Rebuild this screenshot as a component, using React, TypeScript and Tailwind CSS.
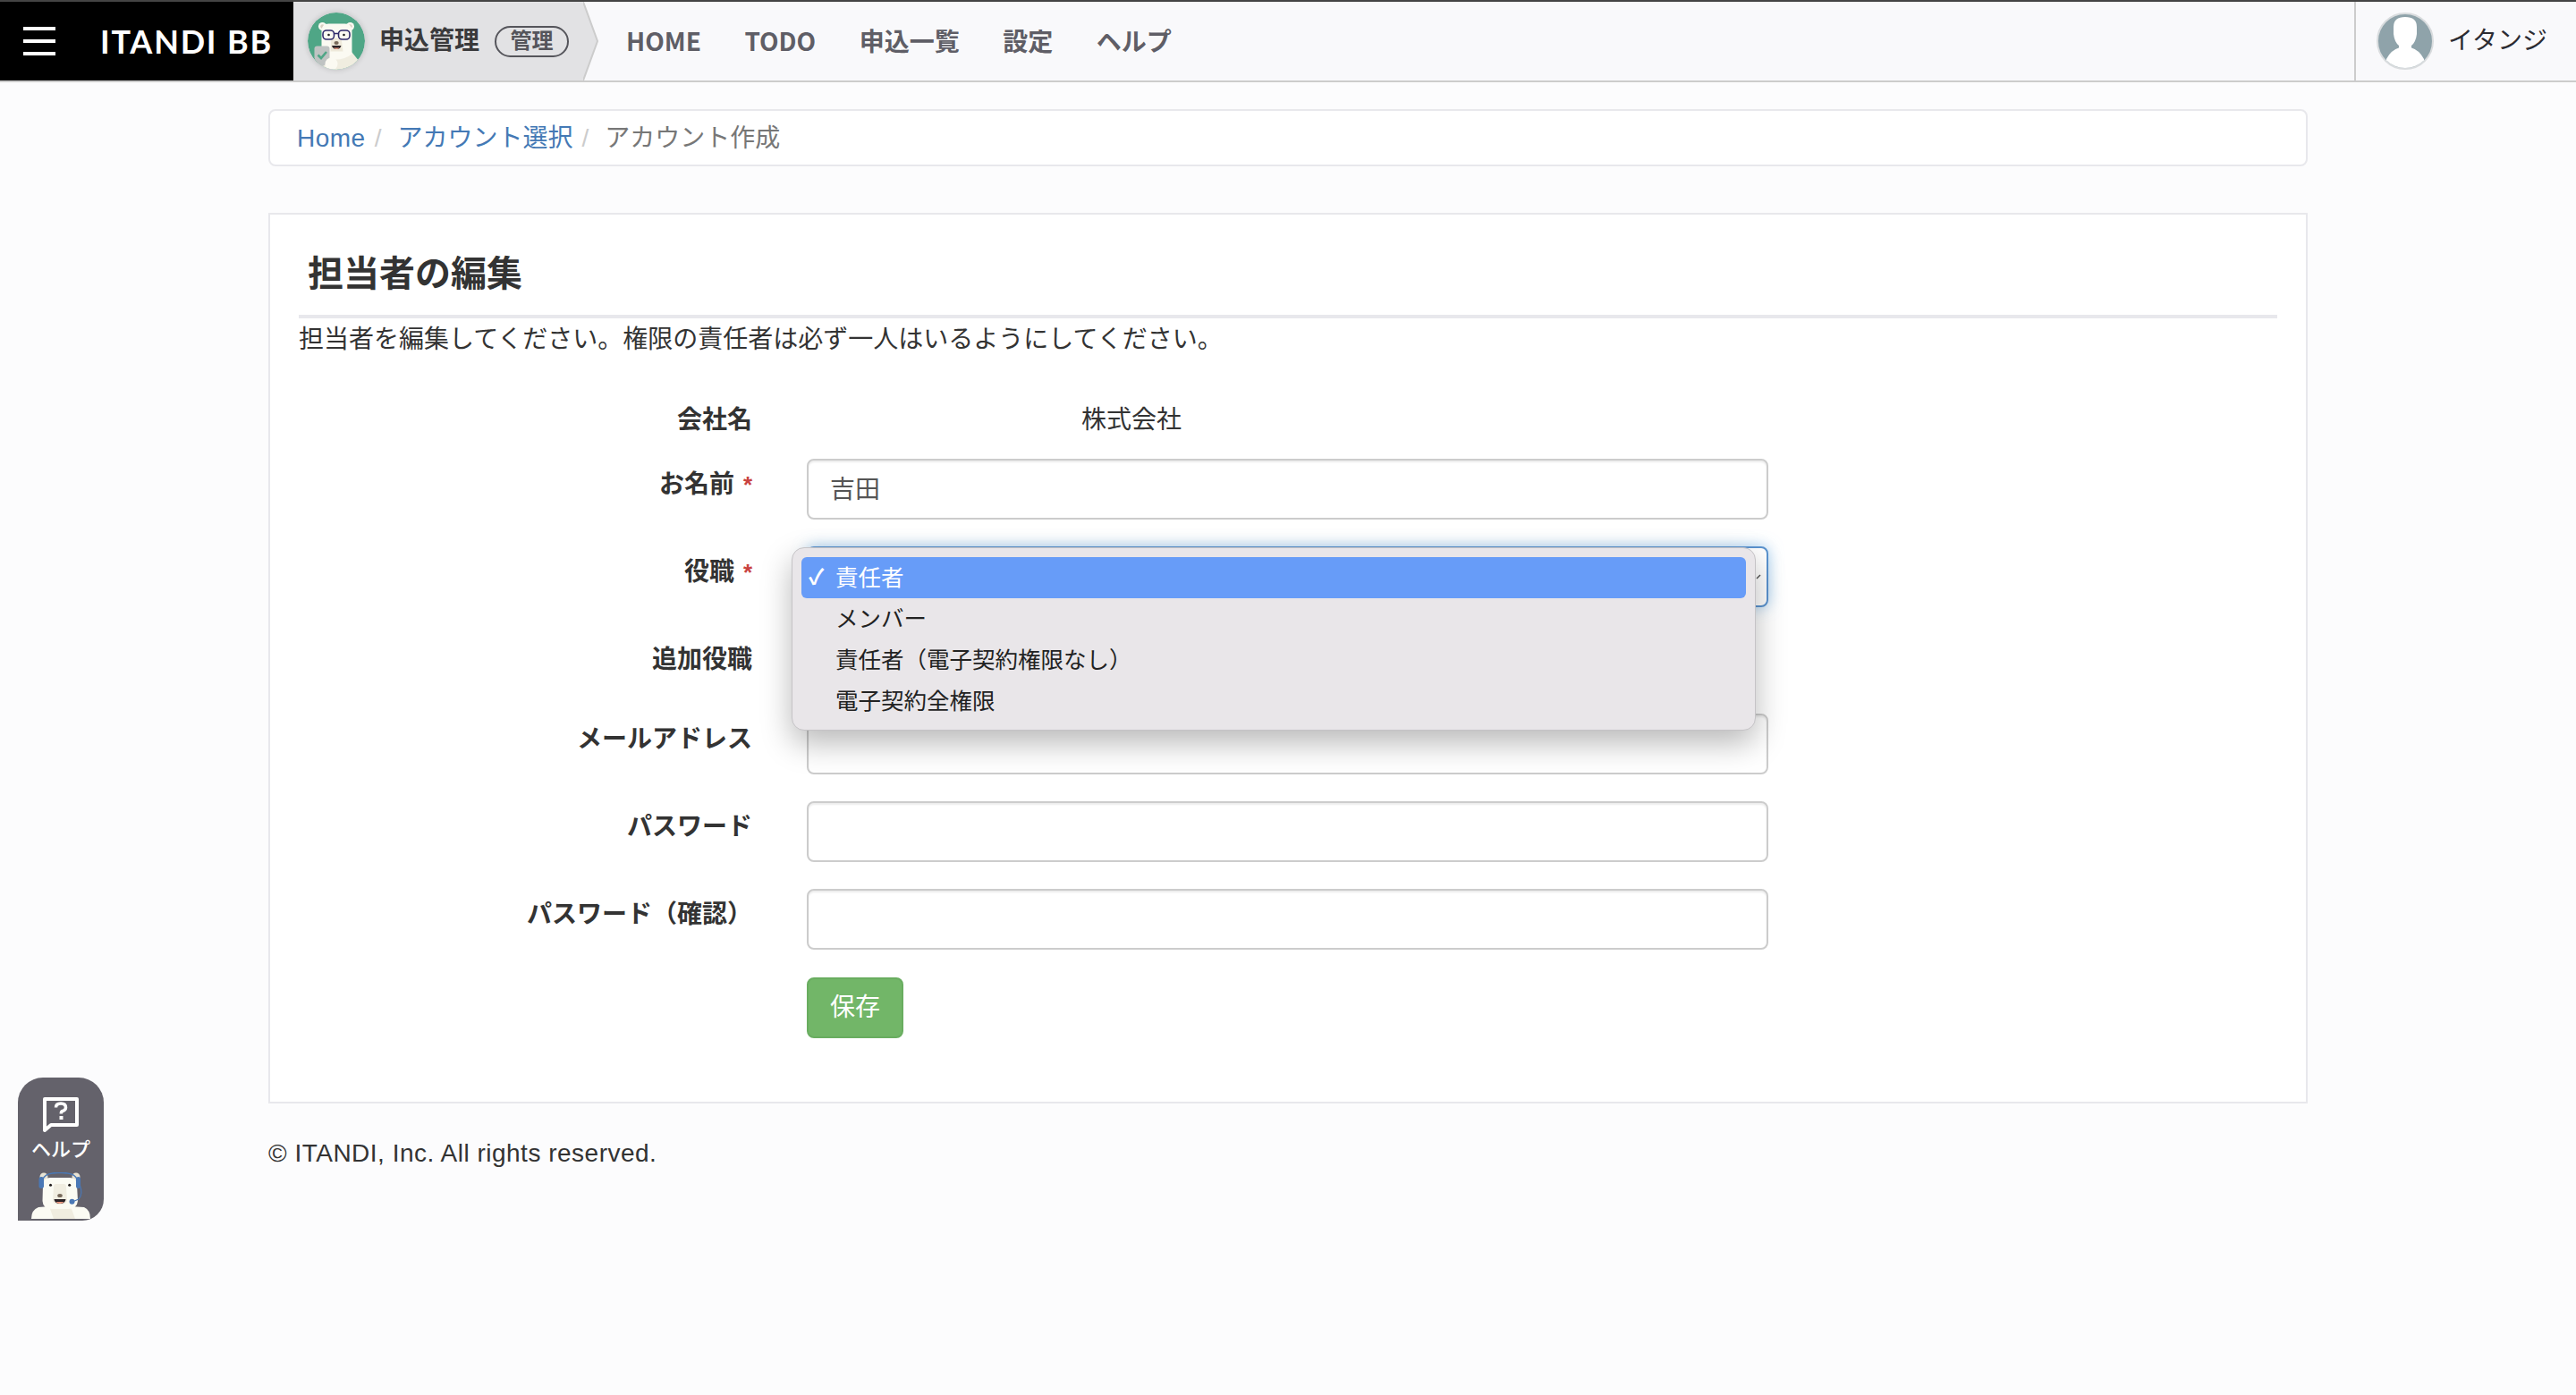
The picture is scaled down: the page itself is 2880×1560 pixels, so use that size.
import React from "react";

const NAV_ITEMS = ["HOME", "TODO", "申込一覧", "設定", "ヘルプ"];
const ROLE_OPTIONS = ["責任者", "メンバー", "責任者（電子契約権限なし）", "電子契約全権限"];

function AppBear() {
  return (
    <svg viewBox="8.5 9.5 64 64" className="w-[64px] h-[64px] shrink-0 rounded-full shadow-[0_0_6px_rgba(0,0,0,0.18)]">
      <defs>
        <clipPath id="appBearClip">
          <circle cx="40.5" cy="41.5" r="32" />
        </clipPath>
      </defs>
      <circle cx="40.5" cy="41.5" r="32" fill="#4fa686" />
      <g clipPath="url(#appBearClip)">
        <path d="M22 78 L24 56 L58 54 L66 64 L66 78 Z" fill="#f0ede0" />
        <circle cx="25" cy="25" r="4.5" fill="#fbfaf2" />
        <circle cx="56" cy="25" r="4.5" fill="#fbfaf2" />
        <circle cx="25" cy="25" r="2.2" fill="#d8cfc0" />
        <circle cx="56" cy="25" r="2.2" fill="#d8cfc0" />
        <path d="M24 30 Q24 22 32 22 L50 22 Q58 22 58 30 L58 56 Q50 62 40 62 Q30 62 24 56 Z" fill="#fbfaf2" />
        <path d="M35 38 L46 38 L48 53 L34 53 Z" fill="#eee9da" />
        <rect x="25.5" y="29.5" width="12.5" height="10" rx="4" fill="#fbfaf2" stroke="#2f2a6b" strokeWidth="1.6" />
        <rect x="43" y="29.5" width="12.5" height="10" rx="4" fill="#fbfaf2" stroke="#2f2a6b" strokeWidth="1.6" />
        <path d="M38 33 H43" stroke="#2f2a6b" strokeWidth="1.4" />
        <circle cx="32" cy="34.5" r="1.3" fill="#222" />
        <circle cx="49" cy="34.5" r="1.3" fill="#222" />
        <ellipse cx="40.6" cy="43.5" rx="2.6" ry="2" fill="#77695a" />
        <path d="M35.5 46.5 H46 Q45 50.5 40.7 50.5 Q36.5 50.5 35.5 46.5 Z" fill="#2a2226" />
        <path d="M37.5 49 H44 Q42.5 50.5 40.7 50.5 Q39 50.5 37.5 49 Z" fill="#ee9b82" />
        <path d="M16 50 Q16 47 19 47 L30 47 Q33 47 33 50 L33 60 Q30 68 24.5 70 Q18 68 16 60 Z" fill="#bfc3c2" />
        <path d="M20 57 L23.5 60.5 L29.5 53.5" fill="none" stroke="#4fa686" strokeWidth="2.6" />
        <circle cx="35" cy="67" r="7" fill="#fbfaf2" />
      </g>
    </svg>
  );
}

function HelpBear() {
  return (
    <svg viewBox="9 14 66 52" className="w-[66px] h-[52px] block">
      <path d="M9 66 Q9 56 17 53 L30 52 L52 52 L68 53 Q75 56 75 66 Z" fill="#fbfbf3" />
      <path d="M29 52 L53 52 L58 66 L34 66 Z" fill="#f0ede0" />
      <circle cx="23" cy="19" r="4.5" fill="#e8e3d3" />
      <circle cx="59" cy="19" r="4.5" fill="#e8e3d3" />
      <path d="M22 28 Q22 20 30 20 L52 20 Q60 20 60 28 L61 46 Q60 55 50 55 L32 55 Q22 55 21.5 46 Z" fill="#fbfbf3" />
      <path d="M22 22 Q24 14 41 14.5 Q58 14 60 22" fill="none" stroke="#4a78b5" strokeWidth="1.4" />
      <rect x="17.5" y="19" width="5.5" height="13" rx="2.7" fill="#4a78b5" />
      <rect x="59" y="19" width="5" height="13" rx="2.5" fill="#4a78b5" />
      <path d="M63.5 29 Q67 38 62 44 L56 46.5" fill="none" stroke="#4a78b5" strokeWidth="1.2" />
      <circle cx="54.5" cy="46.7" r="3" fill="#4a78b5" />
      <path d="M34 30 Q34 27 37 27 L45 27 Q48 27 48 30 L49 46 Q48 50 41 50 Q34 50 33 46 Z" fill="#f0ede0" />
      <circle cx="30.5" cy="28.3" r="1.5" fill="#1f1a1a" />
      <circle cx="51.7" cy="28.3" r="1.5" fill="#1f1a1a" />
      <ellipse cx="41" cy="40" rx="2.8" ry="2.1" fill="#77695a" />
      <path d="M34.5 44 H47.5 Q47 49 41 49 Q35 49 34.5 44 Z" fill="#2a2226" />
      <path d="M36.5 47 H45.5 Q44 49 41 49 Q38 49 36.5 47 Z" fill="#ee9b82" />
    </svg>
  );
}

function UserIcon() {
  return (
    <svg viewBox="0 0 64 64" className="w-[64px] h-[64px] shrink-0">
      <defs>
        <clipPath id="userClip">
          <circle cx="32" cy="32" r="30" />
        </clipPath>
      </defs>
      <circle cx="32" cy="32" r="31" fill="#8fa3aa" stroke="#d9dcde" strokeWidth="2" />
      <g clipPath="url(#userClip)" fill="#ffffff">
        <path d="M19 16 Q19 5 32 5 Q45 5 45 16 L45 24 Q44 33 39 37 L39 40 Q34 44 32 44 Q30 44 25 40 L25 37 Q20 33 19 24 Z" />
        <path d="M11 52 Q16 42 26 39 Q32 44 38 39 Q48 42 53 52 L53 64 L11 64 Z" />
      </g>
    </svg>
  );
}

function FormRow({ label, required, className, children }: { label: string; required?: boolean; className?: string; children?: React.ReactNode }) {
  return (
    <div className={"flex items-start " + (className ?? "")}>
      <label className="w-[507px] shrink-0 pt-[9px] text-right font-bold leading-[40px] text-[#333]">
        {label}
        {required ? <span className="ml-[6px] inline-block w-[14px] text-[26px] text-[#c9423f]">*</span> : null}
      </label>
      <div className="ml-[61px] w-[1075px] shrink-0">{children}</div>
    </div>
  );
}

function TextBox({ value }: { value?: string }) {
  return (
    <div className="h-[68px] rounded-[8px] border-2 border-[#ccc] bg-white px-[24px] leading-[66px] text-[#555] shadow-[inset_0_2px_2px_rgba(0,0,0,0.075)]">
      {value}
    </div>
  );
}

export default function App() {
  return (
    <div className="relative h-[1560px] overflow-hidden bg-[#fcfcfd] text-[28px] text-[#333] [font-family:'Liberation_Sans','Noto_Sans_CJK_JP',sans-serif]">
      {/* Header */}
      <header className="flex h-[92px] border-t-2 border-b-2 border-t-[#444] border-b-[#ccc] bg-[#f9f9fb]">
        <div className="flex w-[328px] shrink-0 items-center bg-black pl-[26px]">
          <div className="flex w-[36px] flex-col gap-[10px]">
            <span className="h-[4px] bg-white"></span>
            <span className="h-[4px] bg-white"></span>
            <span className="h-[4px] bg-white"></span>
          </div>
          <span className="ml-[50px] whitespace-nowrap text-[36px] font-bold tracking-[1.8px] text-white [font-family:Lato,sans-serif]">ITANDI BB</span>
        </div>
        <div className="flex w-[324px] shrink-0 items-center bg-[#e2e2e4] pl-[16px]">
          <AppBear />
          <span className="ml-[16px] whitespace-nowrap font-bold text-[#3a3a3c]">申込管理</span>
          <span className="ml-[17px] flex h-[35px] w-[83px] items-center justify-center rounded-full border-2 border-[#55555b] text-[24px] font-bold text-[#55555b]">管理</span>
        </div>
        <svg viewBox="0 0 18 88" className="h-[88px] w-[18px] shrink-0">
          <path d="M0 0 L16 44 L0 88 Z" fill="#e2e2e4" />
          <path d="M0 0 L16 44 L0 88" fill="none" stroke="#ccc" strokeWidth="2" />
        </svg>
        <nav className="ml-[30px] flex flex-1 items-center gap-[48.5px] pb-[3px] font-bold text-[#5f5e66] [font-family:'Noto_Sans_CJK_JP',sans-serif]">
          {NAV_ITEMS.map((item) => (
            <span key={item} className="whitespace-nowrap">{item}</span>
          ))}
        </nav>
        <div className="flex w-[248px] shrink-0 items-center border-l-2 border-[#ccc] pl-[23px]">
          <UserIcon />
          <span className="ml-[16px] whitespace-nowrap text-[#2c2c33]">イタンジ</span>
        </div>
      </header>

      <main className="mx-auto w-[2280px]">
        {/* Breadcrumb */}
        <div className="mt-[30px] flex h-[64px] items-center rounded-[8px] border-2 border-[#e8e8ec] bg-white pl-[30px] pt-[2px]">
          <a className="tracking-[0.5px] text-[#4479b5]">Home</a>
          <span className="ml-[10px] text-[#ccc]">/</span>
          <a className="ml-[18px] text-[#4479b5]">アカウント選択</a>
          <span className="ml-[10px] text-[#ccc]">/</span>
          <span className="ml-[18px] text-[#777]">アカウント作成</span>
        </div>

        {/* Card */}
        <section className="mt-[52px] h-[996px] border-2 border-[#e8e8ec] bg-white px-[32px]">
          <h1 className="ml-[10px] pt-[38px] text-[40px] font-bold leading-[56px] text-[#333]">担当者の編集</h1>
          <div className="mt-[18px] h-[4px] bg-[#e8e8ec]"></div>
          <p className="mt-[4px] leading-[40px]">担当者を編集してください。権限の責任者は必ず一人はいるようにしてください。</p>

          <form className="mt-[36px] flex flex-col">
            <div className="flex h-[68px] items-center">
              <span className="w-[507px] shrink-0 text-right font-bold">会社名</span>
              <span className="ml-[368px]">株式会社</span>
            </div>
            <FormRow label="お名前" required className="mt-[9px]">
              <TextBox value="吉田" />
            </FormRow>
            <FormRow label="役職" required className="mt-[30px]">
              <div className="relative h-[68px] rounded-[8px] border-2 border-[#5b93cf] bg-white shadow-[0_0_16px_rgba(102,175,233,0.6)]">
                <svg viewBox="0 0 10 10" className="absolute right-[2px] top-[27px] h-[10px] w-[10px]">
                  <path d="M1 7 L5 3" fill="none" stroke="#555" strokeWidth="1.5" />
                </svg>
                {/* Native select popup */}
                <ul className="absolute left-[-19px] top-[-1px] z-10 h-[205px] w-[1078px] rounded-[14px] border border-[#c5c3c6] bg-[#e9e6e9] px-[10px] pt-[10px] text-[25.5px] leading-[46px] text-[#222] shadow-[0_14px_34px_rgba(0,0,0,0.28)]">
                  {ROLE_OPTIONS.map((option, i) => (
                    <li key={option} className={"relative h-[46px] rounded-[6px] pl-[38px] " + (i === 0 ? "bg-[#679cf8] text-white" : "")}>
                      {i === 0 ? <span className="absolute left-[8px] top-0 text-[24px] font-bold">✓</span> : null}
                      {option}
                    </li>
                  ))}
                </ul>
              </div>
            </FormRow>
            <FormRow label="追加役職" className="mt-[30px] h-[60px]" />
            <FormRow label="メールアドレス" className="mt-[29px]">
              <TextBox />
            </FormRow>
            <FormRow label="パスワード" className="mt-[30px]">
              <TextBox />
            </FormRow>
            <FormRow label="パスワード（確認）" className="mt-[30px]">
              <TextBox />
            </FormRow>
            <div className="ml-[568px] mt-[31px]">
              <button type="button" className="h-[68px] w-[108px] rounded-[8px] border-2 border-[#69ad60] bg-[#72b668] text-white">保存</button>
            </div>
          </form>
        </section>

        <footer className="mt-[36px] leading-[40px] tracking-[0.5px] text-[#333]">© ITANDI, Inc. All rights reserved.</footer>
      </main>

      {/* Help tab */}
      <div className="absolute left-[20px] top-[1205px] flex h-[160px] w-[96px] flex-col items-center overflow-hidden rounded-t-[28px] rounded-br-[24px] bg-[#64626b] pt-[22px]">
        <svg viewBox="0 0 40 39" className="h-[39px] w-[40px] shrink-0">
          <path d="M2 2 H38 V31 H9 L2 37 Z" fill="none" stroke="#fff" strokeWidth="4" strokeLinejoin="round" />
          <path d="M14.5 11.5 Q14.5 7 20 7 Q25.5 7 25.5 11.5 Q25.5 14.5 22 15.5 Q20.3 16 20.3 18.5" fill="none" stroke="#fff" strokeWidth="3.5" />
          <rect x="18.5" y="21" width="4" height="4" fill="#fff" />
        </svg>
        <span className="mt-[2px] whitespace-nowrap text-[22px] font-medium leading-[36px] text-white">ヘルプ</span>
        <div className="mt-[7px] shrink-0">
          <HelpBear />
        </div>
      </div>
    </div>
  );
}
